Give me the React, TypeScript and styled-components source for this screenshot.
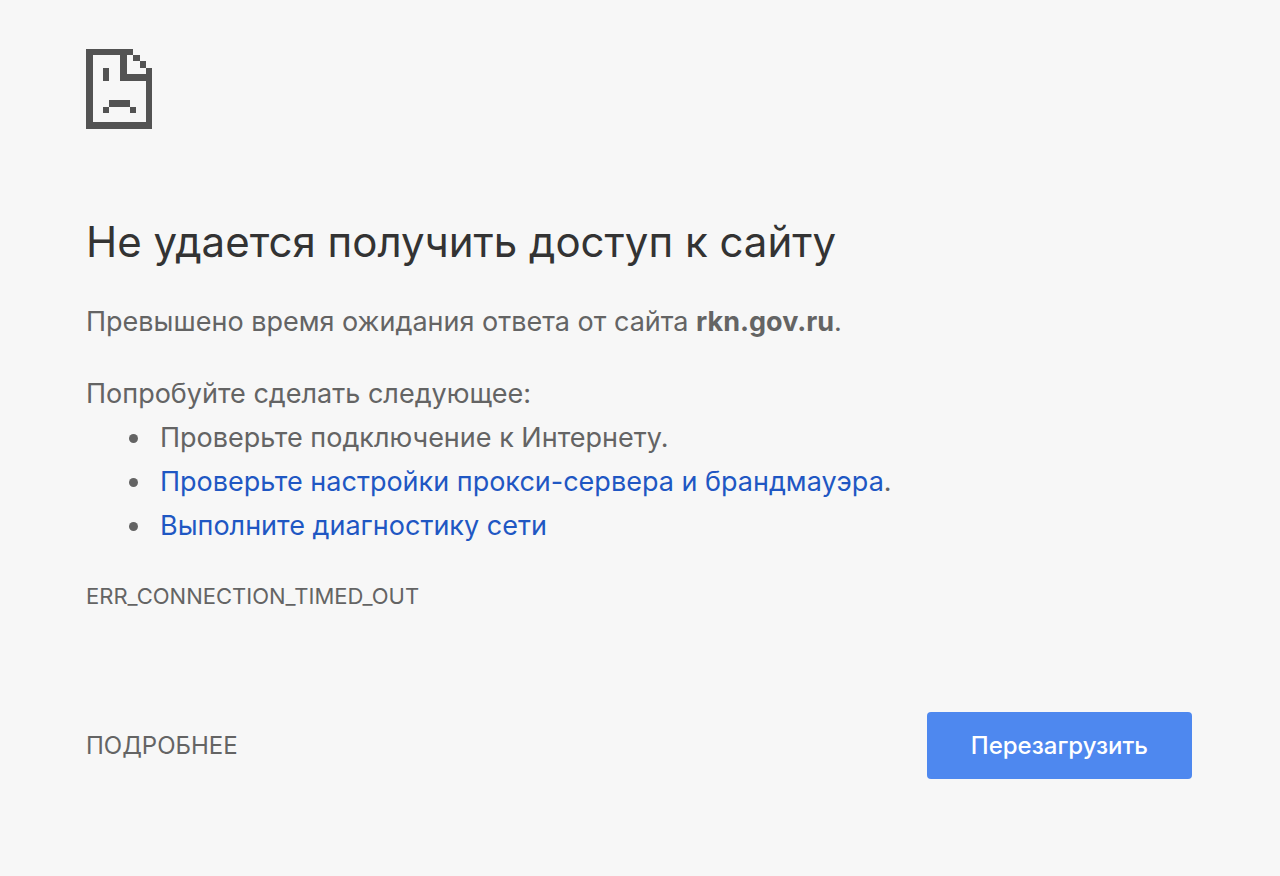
import React from "react";
import styled, { createGlobalStyle } from "styled-components";

const GlobalStyle = createGlobalStyle`
  * { box-sizing: border-box; }
  body {
    margin: 0;
    background: #f7f7f7;
    color: #646464;
    font-family: Inter, "Liberation Sans", sans-serif;
    font-size: 27px;
    line-height: 44px;
  }
`;

const Page = styled.main`
  padding: 49px 88px 96px 86px;
`;

const ErrorIcon = styled.svg`
  display: block;
  width: 67px;
  height: 80px;
  fill: #535353;
`;

const Title = styled.h1`
  margin: 85px 0 0;
  color: #333;
  font-size: 42px;
  font-weight: 400;
  line-height: 56px;
`;

const Summary = styled.p`
  margin: 30px 0 0;
`;

const Suggestions = styled.section`
  margin-top: 28px;
`;

const Lead = styled.p`
  margin: 0;
`;

const List = styled.ul`
  margin: 0;
  padding-left: 67px;
`;

const Item = styled.li`
  padding-left: 7px;
`;

const Link = styled.a`
  color: #1f57c3;
  text-decoration: none;
`;

const ErrorCode = styled.p`
  margin: 26px 0 0;
  font-size: 22px;
`;

const Actions = styled.footer`
  display: flex;
  align-items: center;
  justify-content: space-between;
  margin-top: 94px;
`;

const Button = styled.button`
  padding: 12px 0 11px;
  border: 0;
  background: none;
  color: inherit;
  font: inherit;
  font-size: 24px;
  cursor: pointer;
`;

const ReloadButton = styled(Button)`
  padding-left: 44px;
  padding-right: 44px;
  border-radius: 4px;
  background: #4e88ef;
  color: #fff;
  font-weight: 500;
`;

export default function App() {
  return (
    <>
      <GlobalStyle />
      <Page>
        <ErrorIcon viewBox="-1 0 201 240" shapeRendering="crispEdges" aria-hidden="true">
          <path d="M0 0H140V18H121V76H179V57H198V239H0ZM19 18V219H179V95H102V18Z" fillRule="evenodd" />
          <path d="M140 18H160V37H179V57H160V37H140Z" />
          <path d="M49 57H69V95H49Z" />
          <path d="M69 154H130V173H149V192H130V173H69V192H49V173H69Z" />
        </ErrorIcon>
        <Title>Не удается получить доступ к сайту</Title>
        <Summary>
          Превышено время ожидания ответа от сайта <strong>rkn.gov.ru</strong>.
        </Summary>
        <Suggestions>
          <Lead>Попробуйте сделать следующее:</Lead>
          <List>
            <Item>Проверьте подключение к Интернету.</Item>
            <Item>
              <Link href="#proxy">Проверьте настройки прокси-сервера и брандмауэра</Link>.
            </Item>
            <Item>
              <Link href="#diagnostics">Выполните диагностику сети</Link>
            </Item>
          </List>
        </Suggestions>
        <ErrorCode>ERR_CONNECTION_TIMED_OUT</ErrorCode>
        <Actions>
          <Button type="button">ПОДРОБНЕЕ</Button>
          <ReloadButton type="button">Перезагрузить</ReloadButton>
        </Actions>
      </Page>
    </>
  );
}
